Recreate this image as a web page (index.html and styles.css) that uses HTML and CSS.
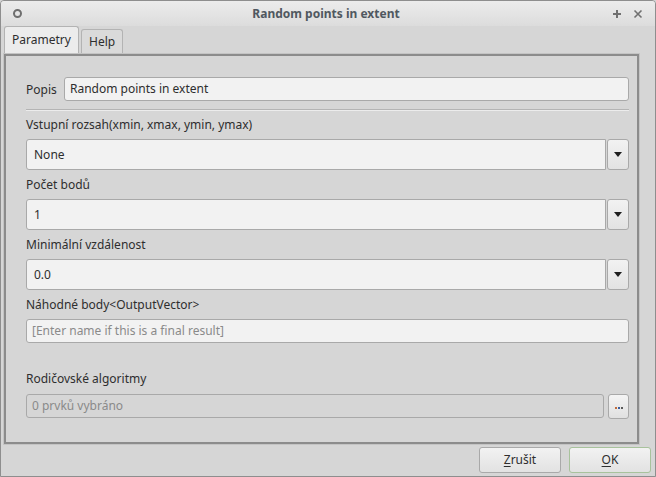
FILE: index.html
```html
<!DOCTYPE html>
<html>
<head>
<meta charset="utf-8">
<link rel="stylesheet" href="styles.css">
</head>
<body>
<div class="window">
  <div class="titlebar">
    <span class="tb-icon"></span>
    <span class="tb-title">Random points in extent</span>
    <span class="tb-actions">
      <svg width="10" height="10" viewBox="0 0 10 10"><path d="M5 1v8M1 5h8" stroke="#707070" stroke-width="2"/></svg>
      <svg width="10" height="10" viewBox="0 0 10 10"><path d="M1.5 1.5l7 7M8.5 1.5l-7 7" stroke="#707070" stroke-width="1.6"/></svg>
    </span>
  </div>
  <div class="tabs">
    <div class="tab active">Parametry</div>
    <div class="tab">Help</div>
  </div>
  <div class="panel">
    <div class="row-popis">
      <span class="lbl-inline">Popis</span>
      <div class="input">Random points in extent</div>
    </div>
    <div class="sep"></div>
    <div class="lbl first">Vstupní rozsah(xmin, xmax, ymin, ymax)</div>
    <div class="combo"><div class="combo-field">None</div><div class="combo-btn"><span class="arrow"></span></div></div>
    <div class="lbl">Počet bodů</div>
    <div class="combo"><div class="combo-field">1</div><div class="combo-btn"><span class="arrow"></span></div></div>
    <div class="lbl">Minimální vzdálenost</div>
    <div class="combo"><div class="combo-field">0.0</div><div class="combo-btn"><span class="arrow"></span></div></div>
    <div class="lbl">Náhodné body&lt;OutputVector&gt;</div>
    <div class="input placeholder">[Enter name if this is a final result]</div>
    <div class="lbl far">Rodičovské algoritmy</div>
    <div class="row-parent">
      <div class="input placeholder disabled">0 prvků vybráno</div>
      <div class="dots-btn"><span class="dots"><i class="d1"></i><i class="d2"></i><i class="d3"></i></span></div>
    </div>
  </div>
  <div class="footer">
    <div class="btn"><u>Z</u>rušit</div>
    <div class="btn ok"><u>O</u>K</div>
  </div>
</div>
</body>
</html>
```
FILE: styles.css
```css
* { box-sizing: border-box; }
html, body { margin: 0; padding: 0; background: #d6d6d6; }
body { font-family: "Noto Sans", "Open Sans", sans-serif; font-size: 12px; color: #2e2e2e; }
.window {
  width: 656px; height: 477px;
  border: 1px solid #8e8e8e;
  border-radius: 4px 4px 0 0;
  background: #d6d6d6;
  display: flex; flex-direction: column;
  overflow: hidden;
}
.titlebar {
  height: 25px; flex: none;
  display: flex; align-items: center;
  background: linear-gradient(#ececec, #dcdcdc);
  padding: 0 12px 0 12px;
}
.tb-icon {
  width: 9px; height: 9px; border: 2px solid #6e6e6e; border-radius: 50%;
}
.tb-title {
  flex: 1; text-align: center; font-weight: bold; color: #505860;
  font-size: 12px; margin-left: 18px;
}
.tb-actions { display: flex; gap: 11px; align-items: center; }
.tabs { display: flex; align-items: flex-end; height: 28px; padding-left: 3px; gap: 2px; flex: none; }
.tab {
  height: 25px; padding: 0 7px; line-height: 24px;
  background: #dadada; border: 1px solid #b3b3b3; border-bottom: none;
  border-radius: 3px 3px 0 0; color: #2e2e2e;
}
.tab.active { height: 28px; background: #ececec; line-height: 26px; width: 75px; }
.panel {
  margin: 0 16px 0 3px; flex: none; height: 390px;
  border: 2px solid #8c8c8c;
  box-shadow: 0 0 0 1px #c4c4c4;
  background: #d6d6d6;
  padding: 21px 8px 0 20px;
  display: flex; flex-direction: column;
}
.row-popis { display: flex; align-items: center; height: 24px; }
.lbl-inline { width: 38px; }
.input {
  flex: 1; height: 24px; line-height: 22px;
  background: #f2f2f2; border: 1px solid #a9a9a9; border-radius: 3px;
  padding: 0 5px; color: #2e2e2e;
}
.input.placeholder { color: #8a8a8a; flex: none; }
.input.disabled { background: #d6d6d6; }
.sep { height: 2px; border-top: 1px solid #b4b4b4; border-bottom: 1px solid #ececec; margin-top: 8px; }
.lbl { height: 18px; line-height: 18px; margin-top: 6px; margin-bottom: 5px; }
.lbl.first { margin-top: 5px; }
.lbl.far { margin-top: 27px; margin-bottom: 6px; }
.combo { display: flex; height: 31px; gap: 1px; }
.combo-field {
  flex: 1; background: #f2f2f2; border: 1px solid #a9a9a9; border-radius: 3px 0 0 3px;
  padding: 0 7px; line-height: 29px;
}
.combo-btn {
  width: 22px; border: 1px solid #a9a9a9; border-radius: 3px;
  background: linear-gradient(#f2f2f2, #e2e2e2);
  display: flex; align-items: center; justify-content: center;
}
.arrow { width: 0; height: 0; border-left: 4px solid transparent; border-right: 4px solid transparent; border-top: 5px solid #1e1e1e; }
.row-parent { display: flex; gap: 4px; height: 25px; }
.row-parent .input { flex: 1; }
.dots-btn {
  width: 21px; height: 25px; border: 1px solid #a9a9a9; border-radius: 3px;
  background: linear-gradient(#f4f4f4, #e0e0e0);
  display: flex; align-items: center; justify-content: center;
}
.dots { display: flex; gap: 1px; margin-top: 3px; }
.dots i { width: 2px; height: 2px; display: block; }
.d1 { background: #c06a3a; } .d2 { background: #3a5fa0; } .d3 { background: #5a5a5a; }
.footer { display: flex; justify-content: flex-end; gap: 8px; padding: 3px 4px 0 0; }
.btn {
  width: 82px; height: 26px; line-height: 24px; text-align: center;
  border: 1px solid #a9a9a9; border-radius: 3px;
  background: linear-gradient(#f2f2f2, #e2e2e2);
  color: #2e2e2e;
}
.btn.ok { border-color: #a8c29c; }
u { text-decoration: underline; text-underline-offset: 2px; }
```
